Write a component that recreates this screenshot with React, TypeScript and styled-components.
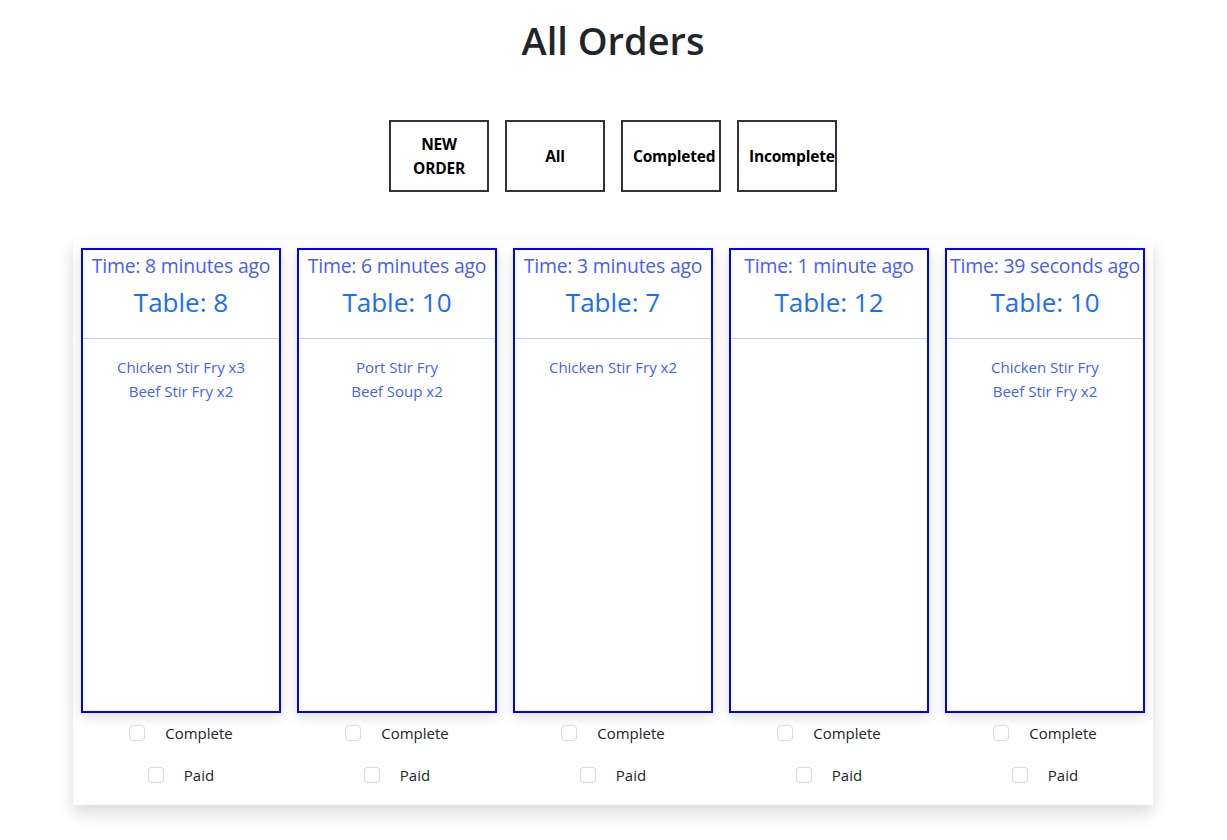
import React from "react";
import styled, { createGlobalStyle } from "styled-components";

const Global = createGlobalStyle`
  html, body { margin: 0; padding: 0; background: #fff; }
  body { font-family: "Open Sans", "Noto Sans", sans-serif; color: #212529; }
  * { box-sizing: border-box; }
`;

const Page = styled.div`
  display: flex;
  flex-direction: column;
  align-items: center;
  padding: 16px 1px 30px 0;
`;

const Title = styled.h1`
  margin: 0;
  font-size: 38px;
  line-height: 48px;
  font-weight: 600;
  color: #212529;
`;

const Toolbar = styled.div`
  display: flex;
  gap: 16px;
  margin-top: 56px;
`;

const FilterButton = styled.button`
  width: 100px;
  height: 72px;
  border: 2px solid #333;
  background: #fff;
  font-family: inherit;
  font-weight: 700;
  font-size: 15.5px;
  line-height: 24px;
  color: #000;
  padding: 0 10px;
  text-align: center;
  letter-spacing: -0.2px;
`;

const Board = styled.div`
  width: 1080px;
  margin-top: 48px;
  padding: 8px 8px 18px;
  background: #fff;
  box-shadow: 0 8px 16px rgba(0, 0, 0, 0.15);
  display: grid;
  grid-template-columns: repeat(5, 200px);
  gap: 16px;
`;

const Column = styled.div`
  display: flex;
  flex-direction: column;
`;

const Card = styled.div`
  height: 465px;
  border: 2px solid #0000ff;
  background: #fff;
  box-shadow: 0 4px 12px rgba(0, 0, 0, 0.13);
  display: flex;
  flex-direction: column;
`;

const CardHeader = styled.div`
  padding: 4px 0 18px;
  border-bottom: 1px solid #b9d3fb;
  text-align: center;
`;

const TimeText = styled.div`
  font-size: 19.4px;
  line-height: 24px;
  color: #4a5cff;
  white-space: nowrap;
  letter-spacing: -0.2px;
`;

const TableText = styled.div`
  margin-top: 6px;
  font-size: 26px;
  line-height: 36px;
  color: #1a6dfd;
`;

const Items = styled.div`
  padding-top: 16px;
  text-align: center;
`;

const Item = styled.div`
  font-size: 15px;
  line-height: 24px;
  color: #4361ff;
`;

const CheckRow = styled.label<{ $first?: boolean }>`
  display: flex;
  align-items: center;
  justify-content: center;
  gap: 20px;
  margin-top: ${(p) => (p.$first ? "8px" : "18px")};
  font-size: 15px;
  line-height: 24px;
  color: #212529;
`;

const Check = styled.input.attrs({ type: "checkbox" })`
  appearance: none;
  margin: 0;
  width: 16px;
  height: 16px;
  border: 1px solid #d6dadf;
  border-radius: 4px;
  background: #fff;
`;

type Order = { time: string; table: number; items: string[] };

const orders: Order[] = [
  { time: "8 minutes ago", table: 8, items: ["Chicken Stir Fry x3", "Beef Stir Fry x2"] },
  { time: "6 minutes ago", table: 10, items: ["Port Stir Fry", "Beef Soup x2"] },
  { time: "3 minutes ago", table: 7, items: ["Chicken Stir Fry x2"] },
  { time: "1 minute ago", table: 12, items: [] },
  { time: "39 seconds ago", table: 10, items: ["Chicken Stir Fry", "Beef Stir Fry x2"] },
];

export default function App() {
  return (
    <>
      <Global />
      <Page>
        <Title>All Orders</Title>
        <Toolbar>
          <FilterButton>
            NEW
            <br />
            ORDER
          </FilterButton>
          <FilterButton>All</FilterButton>
          <FilterButton>Completed</FilterButton>
          <FilterButton>Incomplete</FilterButton>
        </Toolbar>
        <Board>
          {orders.map((o, i) => (
            <Column key={i}>
              <Card>
                <CardHeader>
                  <TimeText>Time: {o.time}</TimeText>
                  <TableText>Table: {o.table}</TableText>
                </CardHeader>
                <Items>
                  {o.items.map((it, j) => (
                    <Item key={j}>{it}</Item>
                  ))}
                </Items>
              </Card>
              <CheckRow $first>
                <Check />
                Complete
              </CheckRow>
              <CheckRow>
                <Check />
                Paid
              </CheckRow>
            </Column>
          ))}
        </Board>
      </Page>
    </>
  );
}
